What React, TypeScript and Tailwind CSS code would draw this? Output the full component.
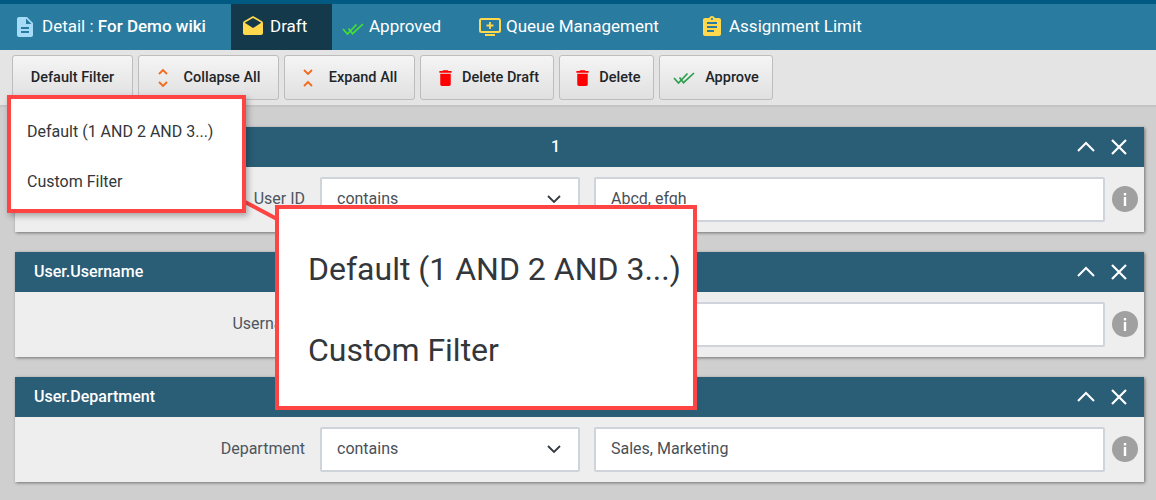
import React from "react";
import { MdDescription, MdDrafts, MdAssignment, MdDelete, MdOutlineKeyboardArrowDown, MdInfo } from "react-icons/md";

function DoubleCheck({ color, className }: { color: string; className?: string }) {
  return (
    <svg viewBox="0 0 22 14" className={className} fill="none" stroke={color} strokeWidth="1.7">
      <path d="M1 7l4.5 5L14.5 2.5" />
      <path d="M6.5 6.5l4 5.2L21 2" />
    </svg>
  );
}

function QueueIcon({ className }: { className?: string }) {
  return (
    <svg viewBox="0 0 22 18" className={className}>
      <rect x="1" y="1" width="20" height="13" rx="1.5" fill="none" stroke="#ffd84d" strokeWidth="2" />
      <path d="M6 17h10" stroke="#ffd84d" strokeWidth="2" />
      <path d="M11 4v7M7.5 7.5h7" stroke="#ffd84d" strokeWidth="1.8" />
    </svg>
  );
}

function Collapse() {
  return (
    <svg viewBox="0 0 12 20" className="w-[12px] h-[20px]" fill="none" stroke="#f26a1b" strokeWidth="1.8">
      <path d="M2 6l4-4 4 4" />
      <path d="M2 14l4 4 4-4" />
    </svg>
  );
}

function Expand() {
  return (
    <svg viewBox="0 0 12 20" className="w-[12px] h-[20px]" fill="none" stroke="#f26a1b" strokeWidth="1.8">
      <path d="M2 2l4 4 4-4" />
      <path d="M2 18l4-4 4 4" />
    </svg>
  );
}

function Tab({ icon, children, active, w }: { icon: React.ReactNode; children: React.ReactNode; active?: boolean; w: string }) {
  return (
    <div className={`${w} h-full flex items-center pl-[10px] gap-[5px] text-white text-[17px] ${active ? "bg-[#14394b]" : ""}`}>
      {icon}
      <span>{children}</span>
    </div>
  );
}

function Btn({ icon, label, w, gap }: { icon?: React.ReactNode; label: string; w: string; gap: string }) {
  return (
    <div className={`${w} h-[45px] rounded-[3px] border border-[#bdbdbd] bg-gradient-to-b from-[#f5f5f5] to-[#e0e0e0] flex items-center justify-center ${gap} text-[14.5px] font-medium text-[#212529]`}>
      {icon}
      <span>{label}</span>
    </div>
  );
}

function Card({ title, label, value, dim }: { title: string; label: string; value: string; dim?: boolean }) {
  return (
    <div className="h-[105px] bg-[#eeeeee] shadow-[1px_1px_3px_rgba(0,0,0,0.45)]">
      <div className="h-[40px] bg-[#2a5d76] flex items-center pl-[19px] pr-[17px] text-white text-[16px] font-medium relative">
        <span className={dim ? "flex-1 text-center" : "flex-1"}>{title}</span>
        <svg viewBox="0 0 18 12" className="w-[18px] h-[12px] mr-[16px]" fill="none" stroke="white" strokeWidth="2"><path d="M1 10l8-8 8 8" /></svg>
        <svg viewBox="0 0 16 16" className="w-[16px] h-[16px]" fill="none" stroke="white" strokeWidth="2.2"><path d="M1 1l14 14M15 1L1 15" /></svg>
      </div>
      <div className="flex items-center h-[65px] pb-[1px]">
        <div className="w-[290px] text-right text-[16px] text-[#4d5560]">{label}</div>
        <div className="w-[260px] h-[45px] ml-[15px] bg-white border-2 border-[#ced4da] rounded-[2px] flex items-center justify-between pl-[15px] pr-[17px] text-[16px] text-[#495057]">
          <span>contains</span>
          <svg viewBox="0 0 14 8" className="w-[14px] h-[8px]" fill="none" stroke="#343a40" strokeWidth="1.8"><path d="M1 1l6 6 6-6" /></svg>
        </div>
        <div className="w-[511px] h-[45px] ml-[14px] bg-white border-2 border-[#ced4da] rounded-[2px] flex items-center pl-[15px] text-[16px] text-[#495057]">{value}</div>
        <div className="w-[26px] h-[26px] ml-[7px] rounded-full bg-[#a0a0a0] flex items-center justify-center">
          <svg viewBox="0 0 4 13" className="w-[4px] h-[13px]" fill="white"><rect x="0.8" y="0" width="2.4" height="2.4" /><rect x="0.8" y="4" width="2.4" height="9" /></svg>
        </div>
      </div>
    </div>
  );
}

export default function App() {
  return (
    <div className="w-[1156px] h-[500px] relative overflow-hidden bg-[#cfcfcf] font-['Roboto',sans-serif]">
      <div className="h-[50px] bg-[#2a7ba0] border-t-4 border-[#005a82] flex pl-[3px]">
        <Tab w="w-[228px]" icon={<MdDescription className="w-[24px] h-[24px] text-[#a6dcf7]" />}>
          Detail : <b className="font-medium">For Demo wiki</b>
        </Tab>
        <Tab w="w-[101px]" active icon={<MdDrafts className="w-[24px] h-[24px] text-[#ffd84d]" />}>Draft</Tab>
        <Tab w="w-[137px]" icon={<DoubleCheck color="#43e22e" className="w-[22px] h-[14px] mt-[3px]" />}>Approved</Tab>
        <Tab w="w-[221px]" icon={<QueueIcon className="w-[22px] h-[18px]" />}>Queue Management</Tab>
        <Tab w="w-[200px]" icon={<MdAssignment className="w-[24px] h-[24px] text-[#ffd84d]" />}>Assignment Limit</Tab>
      </div>
      <div className="h-[57px] bg-[#e4e4e4] border-b-2 border-[#c4c4c4] flex pt-[5px] pl-[12px] gap-[5px]">
        <Btn w="w-[121px]" gap="" label="Default Filter" />
        <Btn w="w-[141px]" gap="gap-[15px]" icon={<Collapse />} label="Collapse All" />
        <Btn w="w-[131px]" gap="gap-[15px]" icon={<Expand />} label="Expand All" />
        <Btn w="w-[134px]" gap="gap-[6px]" icon={<MdDelete className="w-[21px] h-[24px] text-[#ff0000]" />} label="Delete Draft" />
        <Btn w="w-[95px]" gap="gap-[6px]" icon={<MdDelete className="w-[21px] h-[24px] text-[#ff0000]" />} label="Delete" />
        <Btn w="w-[114px]" gap="gap-[10px]" icon={<DoubleCheck color="#2e9e4f" className="w-[22px] h-[14px]" />} label="Approve" />
      </div>
      <div className="pt-[20px] px-[15px] pr-[12px] flex flex-col gap-[20px]">
        <Card title="1" dim label="User ID" value="Abcd, efgh" />
        <Card title="User.Username" label="Username" value="" />
        <Card title="User.Department" label="Department" value="Sales, Marketing" />
      </div>

      <svg className="absolute left-[244px] top-[200px] w-[34px] h-[22px]" viewBox="0 0 34 22">
        <path d="M1 2L33 19" stroke="#ff4444" strokeWidth="4" fill="none" />
      </svg>
      <div className="absolute left-[7px] top-[95px] w-[239px] h-[118px] bg-white border-[4px] border-[#ff4444] shadow-[2px_3px_6px_rgba(0,0,0,0.3)] text-[16px] text-[#33373b] pl-[16px]">
        <div className="h-[55px] pt-[22px] leading-[22px]">Default (1 AND 2 AND 3...)</div>
        <div className="h-[45px] pt-[17px] leading-[22px]">Custom Filter</div>
      </div>
      <div className="absolute left-[275px] top-[205px] w-[422px] h-[205px] bg-white border-[4px] border-[#ff4444] text-[32px] text-[#33373b] pl-[29px]">
        <div className="h-[81px] pt-[40px] leading-[40px]">Default (1 AND 2 AND 3...)</div>
        <div className="pt-[40px] leading-[40px]">Custom Filter</div>
      </div>
    </div>
  );
}
